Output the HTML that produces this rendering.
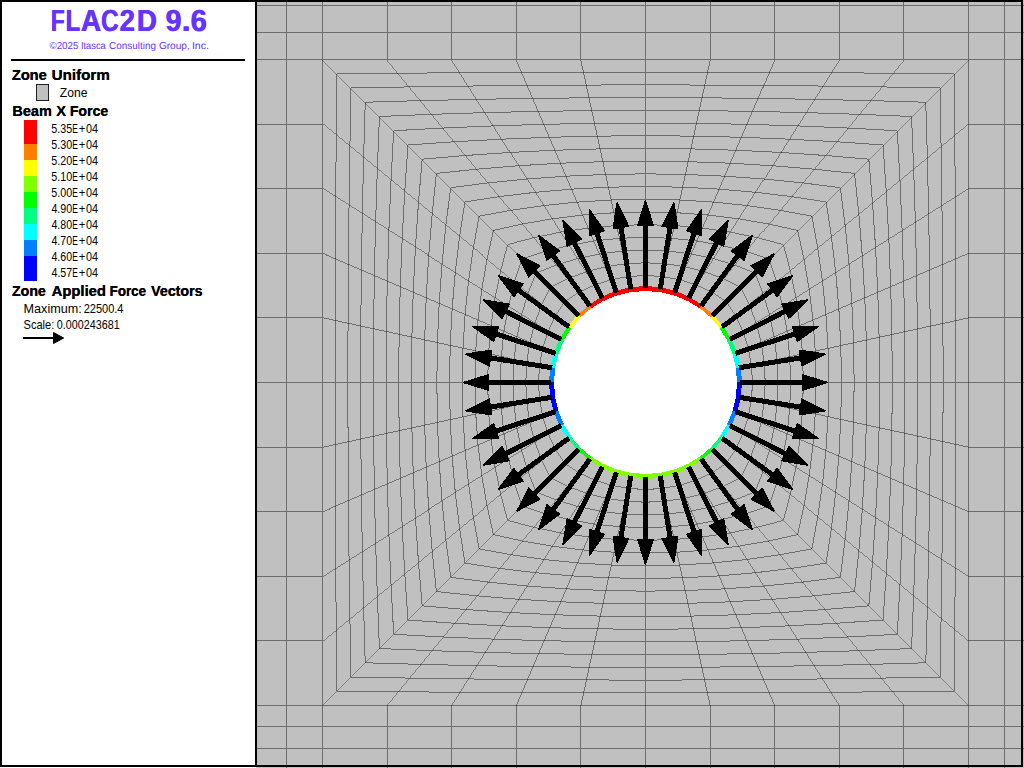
<!DOCTYPE html>
<html><head><meta charset="utf-8"><title>FLAC2D 9.6</title>
<style>
html,body{margin:0;padding:0;background:#fff;}
svg{display:block;font-family:"Liberation Sans",sans-serif;}
</style></head><body>
<svg width="1024" height="768" viewBox="0 0 1024 768">
<rect x="0" y="0" width="1024" height="768" fill="#ffffff"/>
<rect x="256" y="0" width="768" height="768" fill="#c0c0c0"/>
<polygon points="739.8,382.5 738.64,367.75 735.18,353.36 729.52,339.69 721.79,327.07 712.18,315.82 700.93,306.21 688.31,298.48 674.64,292.82 660.25,289.36 645.5,288.2 630.75,289.36 616.36,292.82 602.69,298.48 590.07,306.21 578.82,315.82 569.21,327.07 561.48,339.69 555.82,353.36 552.36,367.75 551.2,382.5 552.36,397.25 555.82,411.64 561.48,425.31 569.21,437.93 578.82,449.18 590.07,458.79 602.69,466.52 616.36,472.18 630.75,475.64 645.5,476.8 660.25,475.64 674.64,472.18 688.31,466.52 700.93,458.79 712.18,449.18 721.79,437.93 729.52,425.31 735.18,411.64 738.64,397.25" fill="#ffffff"/>
<clipPath id="pc"><rect x="257" y="0" width="767" height="768"/></clipPath>
<g fill="none" stroke="#000000" stroke-opacity="0.43" stroke-width="1" shape-rendering="crispEdges" clip-path="url(#pc)">
<path d="M250 5.5H1030M250 32.5H1030M250 59.5H1030M250 705.5H1030M250 726.5H1030M250 748.5H1030M286.5 -5V775M322.5 -5V775M968.5 -5V775M1004.5 -5V775M387.1 -5V59.5M387.1 705.5V775M250 124.1H322.5M968.5 124.1H1030M451.7 -5V59.5M451.7 705.5V775M250 188.7H322.5M968.5 188.7H1030M516.3 -5V59.5M516.3 705.5V775M250 253.3H322.5M968.5 253.3H1030M580.9 -5V59.5M580.9 705.5V775M250 317.9H322.5M968.5 317.9H1030M645.5 -5V59.5M645.5 705.5V775M250 382.5H322.5M968.5 382.5H1030M710.1 -5V59.5M710.1 705.5V775M250 447.1H322.5M968.5 447.1H1030M774.7 -5V59.5M774.7 705.5V775M250 511.7H322.5M968.5 511.7H1030M839.3 -5V59.5M839.3 705.5V775M250 576.3H322.5M968.5 576.3H1030M903.9 -5V59.5M903.9 705.5V775M250 640.9H322.5M968.5 640.9H1030"/>
<path d="M968.5 59.5L712.18 315.82M322.5 59.5L578.82 315.82M322.5 705.5L578.82 449.18M968.5 705.5L712.18 449.18" stroke-width="0.71"/>
<path d="M721.79 327.07L712.18 315.82M712.18 315.82L700.93 306.21M590.07 306.21L578.82 315.82M578.82 315.82L569.21 327.07M569.21 437.93L578.82 449.18M578.82 449.18L590.07 458.79M700.93 458.79L712.18 449.18M712.18 449.18L721.79 437.93" stroke-width="0.77"/>
<path d="M968.5 124.1L721.79 327.07M903.9 59.5L700.93 306.21M387.1 59.5L590.07 306.21M322.5 124.1L569.21 327.07M322.5 640.9L569.21 437.93M387.1 705.5L590.07 458.79M903.9 705.5L700.93 458.79M968.5 640.9L721.79 437.93" stroke-width="0.78"/>
<path d="M968.5 188.7L729.52 339.69M839.3 59.5L688.31 298.48M451.7 59.5L602.69 298.48M322.5 188.7L561.48 339.69M322.5 576.3L561.48 425.31M451.7 705.5L602.69 466.52M839.3 705.5L688.31 466.52M968.5 576.3L729.52 425.31M735.5 315.8L726.42 301.58M726.42 301.58L712.2 292.5M578.8 292.5L564.58 301.58M564.58 301.58L555.5 315.8M555.5 449.2L564.58 463.42M564.58 463.42L578.8 472.5M712.2 472.5L726.42 463.42M726.42 463.42L735.5 449.2" stroke-width="0.85"/>
<path d="M729.52 339.69L721.79 327.07M700.93 306.21L688.31 298.48M602.69 298.48L590.07 306.21M569.21 327.07L561.48 339.69M561.48 425.31L569.21 437.93M590.07 458.79L602.69 466.52M688.31 466.52L700.93 458.79M721.79 437.93L729.52 425.31" stroke-width="0.86"/>
<path d="M749.2 304.52L740.66 287.34M740.66 287.34L723.48 278.8M567.52 278.8L550.34 287.34M550.34 287.34L541.8 304.52M541.8 460.48L550.34 477.66M550.34 477.66L567.52 486.2M723.48 486.2L740.66 477.66M740.66 477.66L749.2 460.48" stroke-width="0.9"/>
<path d="M742.8 331.3L735.5 315.8M712.2 292.5L696.7 285.2M594.3 285.2L578.8 292.5M555.5 315.8L548.2 331.3M548.2 433.7L555.5 449.2M578.8 472.5L594.3 479.8M696.7 479.8L712.2 472.5M735.5 449.2L742.8 433.7" stroke-width="0.91"/>
<path d="M968.5 253.3L735.18 353.36M774.7 59.5L674.64 292.82M516.3 59.5L616.36 292.82M322.5 253.3L555.82 353.36M322.5 511.7L555.82 411.64M516.3 705.5L616.36 472.18M774.7 705.5L674.64 472.18M968.5 511.7L735.18 411.64" stroke-width="0.92"/>
<path d="M762.91 293.24L754.9 273.1M754.9 273.1L734.76 265.09M556.24 265.09L536.1 273.1M536.1 273.1L528.09 293.24M528.09 471.76L536.1 491.9M536.1 491.9L556.24 499.91M734.76 499.91L754.9 491.9M754.9 491.9L762.91 471.76M735.18 353.36L729.52 339.69M688.31 298.48L674.64 292.82M616.36 292.82L602.69 298.48M561.48 339.69L555.82 353.36M555.82 411.64L561.48 425.31M602.69 466.52L616.36 472.18M674.64 472.18L688.31 466.52M729.52 425.31L735.18 411.64" stroke-width="0.93"/>
<path d="M756.08 322.91L749.2 304.52M723.48 278.8L705.09 271.92M585.91 271.92L567.52 278.8M541.8 304.52L534.92 322.91M534.92 442.09L541.8 460.48M567.52 486.2L585.91 493.08M705.09 493.08L723.48 486.2M749.2 460.48L756.08 442.09" stroke-width="0.94"/>
<path d="M776.61 281.97L769.14 258.86M769.14 258.86L746.03 251.39M544.97 251.39L521.86 258.86M521.86 258.86L514.39 281.97M514.39 483.03L521.86 506.14M521.86 506.14L544.97 513.61M746.03 513.61L769.14 506.14M769.14 506.14L776.61 483.03M769.35 314.52L762.91 293.24M734.76 265.09L713.48 258.65M577.52 258.65L556.24 265.09M528.09 293.24L521.65 314.52M521.65 450.48L528.09 471.76M556.24 499.91L577.52 506.35M713.48 506.35L734.76 499.91M762.91 471.76L769.35 450.48M748.15 347.8L742.8 331.3M696.7 285.2L680.2 279.85M610.8 279.85L594.3 285.2M548.2 331.3L542.85 347.8M542.85 417.2L548.2 433.7M594.3 479.8L610.8 485.15M680.2 485.15L696.7 479.8M742.8 433.7L748.15 417.2" stroke-width="0.96"/>
<path d="M790.32 270.69L783.38 244.62M783.38 244.62L757.31 237.68M533.69 237.68L507.62 244.62M507.62 244.62L500.68 270.69M500.68 494.31L507.62 520.38M507.62 520.38L533.69 527.32M757.31 527.32L783.38 520.38M783.38 520.38L790.32 494.31M761.11 342.24L756.08 322.91M705.09 271.92L685.76 266.89M605.24 266.89L585.91 271.92M534.92 322.91L529.89 342.24M529.89 422.76L534.92 442.09M585.91 493.08L605.24 498.11M685.76 498.11L705.09 493.08M756.08 442.09L761.11 422.76" stroke-width="0.97"/>
<path d="M968.5 317.9L738.64 367.75M710.1 59.5L660.25 289.36M580.9 59.5L630.75 289.36M322.5 317.9L552.36 367.75M322.5 447.1L552.36 397.25M580.9 705.5L630.75 475.64M710.1 705.5L660.25 475.64M968.5 447.1L738.64 397.25M804.03 259.41L797.62 230.38M797.62 230.38L768.59 223.97M522.41 223.97L493.38 230.38M493.38 230.38L486.97 259.41M486.97 505.59L493.38 534.62M493.38 534.62L522.41 541.03M768.59 541.03L797.62 534.62M797.62 534.62L804.03 505.59M795.9 297.75L790.32 270.69M757.31 237.68L730.25 232.1M560.75 232.1L533.69 237.68M500.68 270.69L495.1 297.75M495.1 467.25L500.68 494.31M533.69 527.32L560.75 532.9M730.25 532.9L757.31 527.32M790.32 494.31L795.9 467.25M782.63 306.14L776.61 281.97M746.03 251.39L721.86 245.37M569.14 245.37L544.97 251.39M514.39 281.97L508.37 306.14M508.37 458.86L514.39 483.03M544.97 513.61L569.14 519.63M721.86 519.63L746.03 513.61M776.61 483.03L782.63 458.86M774.07 336.68L769.35 314.52M713.48 258.65L691.32 253.93M599.68 253.93L577.52 258.65M521.65 314.52L516.93 336.68M516.93 428.32L521.65 450.48M577.52 506.35L599.68 511.07M691.32 511.07L713.48 506.35M769.35 450.48L774.07 428.32M738.64 367.75L735.18 353.36M674.64 292.82L660.25 289.36M630.75 289.36L616.36 292.82M555.82 353.36L552.36 367.75M552.36 397.25L555.82 411.64M616.36 472.18L630.75 475.64M660.25 475.64L674.64 472.18M735.18 411.64L738.64 397.25" stroke-width="0.98"/>
<path d="M831.44 236.86L826.1 201.9M826.1 201.9L791.14 196.56M499.86 196.56L464.9 201.9M464.9 201.9L459.56 236.86M459.56 528.14L464.9 563.1M464.9 563.1L499.86 568.44M791.14 568.44L826.1 563.1M826.1 563.1L831.44 528.14M822.46 280.97L817.73 248.14M817.73 248.14L811.86 216.14M811.86 216.14L779.86 210.27M779.86 210.27L747.03 205.54M543.97 205.54L511.14 210.27M511.14 210.27L479.14 216.14M479.14 216.14L473.27 248.14M473.27 248.14L468.54 280.97M468.54 484.03L473.27 516.86M473.27 516.86L479.14 548.86M479.14 548.86L511.14 554.73M511.14 554.73L543.97 559.46M747.03 559.46L779.86 554.73M779.86 554.73L811.86 548.86M811.86 548.86L817.73 516.86M817.73 516.86L822.46 484.03M809.18 289.36L804.03 259.41M768.59 223.97L738.64 218.82M552.36 218.82L522.41 223.97M486.97 259.41L481.82 289.36M481.82 475.64L486.97 505.59M522.41 541.03L552.36 546.18M738.64 546.18L768.59 541.03M804.03 505.59L809.18 475.64M799.99 325.57L795.9 297.75M730.25 232.1L702.43 228.01M588.57 228.01L560.75 232.1M495.1 297.75L491.01 325.57M491.01 439.43L495.1 467.25M560.75 532.9L588.57 536.99M702.43 536.99L730.25 532.9M795.9 467.25L799.99 439.43M787.03 331.12L782.63 306.14M721.86 245.37L696.88 240.97M594.12 240.97L569.14 245.37M508.37 306.14L503.97 331.12M503.97 433.88L508.37 458.86M569.14 519.63L594.12 524.03M696.88 524.03L721.86 519.63M782.63 458.86L787.03 433.88M764.18 362.21L761.11 342.24M685.76 266.89L665.79 263.82M625.21 263.82L605.24 266.89M529.89 342.24L526.82 362.21M526.82 402.79L529.89 422.76M605.24 498.11L625.21 501.18M665.79 501.18L685.76 498.11M761.11 422.76L764.18 402.79M751.41 364.98L748.15 347.8M680.2 279.85L663.02 276.59M627.98 276.59L610.8 279.85M542.85 347.8L539.59 364.98M539.59 400.02L542.85 417.2M610.8 485.15L627.98 488.41M663.02 488.41L680.2 485.15M748.15 417.2L751.41 400.02" stroke-width="0.99"/>
<path d="M968.5 382.5L739.8 382.5M645.5 59.5L645.5 288.2M322.5 382.5L551.2 382.5M645.5 705.5L645.5 476.8M955.79 382.5L955.73 320.67M955.73 320.67L955.54 258.86M955.54 258.86L955.22 197.09M955.22 197.09L954.79 135.38M954.79 135.38L954.26 73.74M954.26 73.74L892.62 73.21M892.62 73.21L830.91 72.78M830.91 72.78L769.14 72.46M769.14 72.46L707.33 72.27M707.33 72.27L645.5 72.21M645.5 72.21L583.67 72.27M583.67 72.27L521.86 72.46M521.86 72.46L460.09 72.78M460.09 72.78L398.38 73.21M398.38 73.21L336.74 73.74M336.74 73.74L336.21 135.38M336.21 135.38L335.78 197.09M335.78 197.09L335.46 258.86M335.46 258.86L335.27 320.67M335.27 320.67L335.21 382.5M335.21 382.5L335.27 444.33M335.27 444.33L335.46 506.14M335.46 506.14L335.78 567.91M335.78 567.91L336.21 629.62M336.21 629.62L336.74 691.26M336.74 691.26L398.38 691.79M398.38 691.79L460.09 692.22M460.09 692.22L521.86 692.54M521.86 692.54L583.67 692.73M583.67 692.73L645.5 692.79M645.5 692.79L707.33 692.73M707.33 692.73L769.14 692.54M769.14 692.54L830.91 692.22M830.91 692.22L892.62 691.79M892.62 691.79L954.26 691.26M954.26 691.26L954.79 629.62M954.79 629.62L955.22 567.91M955.22 567.91L955.54 506.14M955.54 506.14L955.73 444.33M955.73 444.33L955.79 382.5M943.09 382.5L942.96 323.44M942.96 323.44L942.58 264.42M942.58 264.42L941.95 205.48M941.95 205.48L941.09 146.65M941.09 146.65L940.02 87.98M940.02 87.98L881.35 86.91M881.35 86.91L822.52 86.05M822.52 86.05L763.58 85.42M763.58 85.42L704.56 85.04M704.56 85.04L645.5 84.91M645.5 84.91L586.44 85.04M586.44 85.04L527.42 85.42M527.42 85.42L468.48 86.05M468.48 86.05L409.65 86.91M409.65 86.91L350.98 87.98M350.98 87.98L349.91 146.65M349.91 146.65L349.05 205.48M349.05 205.48L348.42 264.42M348.42 264.42L348.04 323.44M348.04 323.44L347.91 382.5M347.91 382.5L348.04 441.56M348.04 441.56L348.42 500.58M348.42 500.58L349.05 559.52M349.05 559.52L349.91 618.35M349.91 618.35L350.98 677.02M350.98 677.02L409.65 678.09M409.65 678.09L468.48 678.95M468.48 678.95L527.42 679.58M527.42 679.58L586.44 679.96M586.44 679.96L645.5 680.09M645.5 680.09L704.56 679.96M704.56 679.96L763.58 679.58M763.58 679.58L822.52 678.95M822.52 678.95L881.35 678.09M881.35 678.09L940.02 677.02M940.02 677.02L941.09 618.35M941.09 618.35L941.95 559.52M941.95 559.52L942.58 500.58M942.58 500.58L942.96 441.56M942.96 441.56L943.09 382.5M930.38 382.5L930.19 326.21M930.19 326.21L929.61 269.98M929.61 269.98L928.67 213.86M928.67 213.86L927.38 157.93M927.38 157.93L925.78 102.22M925.78 102.22L870.07 100.62M870.07 100.62L814.14 99.33M814.14 99.33L758.02 98.39M758.02 98.39L701.79 97.81M701.79 97.81L645.5 97.62M645.5 97.62L589.21 97.81M589.21 97.81L532.98 98.39M532.98 98.39L476.86 99.33M476.86 99.33L420.93 100.62M420.93 100.62L365.22 102.22M365.22 102.22L363.62 157.93M363.62 157.93L362.33 213.86M362.33 213.86L361.39 269.98M361.39 269.98L360.81 326.21M360.81 326.21L360.62 382.5M360.62 382.5L360.81 438.79M360.81 438.79L361.39 495.02M361.39 495.02L362.33 551.14M362.33 551.14L363.62 607.07M363.62 607.07L365.22 662.78M365.22 662.78L420.93 664.38M420.93 664.38L476.86 665.67M476.86 665.67L532.98 666.61M532.98 666.61L589.21 667.19M589.21 667.19L645.5 667.38M645.5 667.38L701.79 667.19M701.79 667.19L758.02 666.61M758.02 666.61L814.14 665.67M814.14 665.67L870.07 664.38M870.07 664.38L925.78 662.78M925.78 662.78L927.38 607.07M927.38 607.07L928.67 551.14M928.67 551.14L929.61 495.02M929.61 495.02L930.19 438.79M930.19 438.79L930.38 382.5M917.68 382.5L917.42 328.98M917.42 328.98L916.65 275.54M916.65 275.54L915.39 222.25M915.39 222.25L913.68 169.2M913.68 169.2L911.54 116.46M911.54 116.46L858.8 114.32M858.8 114.32L805.75 112.61M805.75 112.61L752.46 111.35M752.46 111.35L699.02 110.58M699.02 110.58L645.5 110.32M645.5 110.32L591.98 110.58M591.98 110.58L538.54 111.35M538.54 111.35L485.25 112.61M485.25 112.61L432.2 114.32M432.2 114.32L379.46 116.46M379.46 116.46L377.32 169.2M377.32 169.2L375.61 222.25M375.61 222.25L374.35 275.54M374.35 275.54L373.58 328.98M373.58 328.98L373.32 382.5M373.32 382.5L373.58 436.02M373.58 436.02L374.35 489.46M374.35 489.46L375.61 542.75M375.61 542.75L377.32 595.8M377.32 595.8L379.46 648.54M379.46 648.54L432.2 650.68M432.2 650.68L485.25 652.39M485.25 652.39L538.54 653.65M538.54 653.65L591.98 654.42M591.98 654.42L645.5 654.68M645.5 654.68L699.02 654.42M699.02 654.42L752.46 653.65M752.46 653.65L805.75 652.39M805.75 652.39L858.8 650.68M858.8 650.68L911.54 648.54M911.54 648.54L913.68 595.8M913.68 595.8L915.39 542.75M915.39 542.75L916.65 489.46M916.65 489.46L917.42 436.02M917.42 436.02L917.68 382.5M904.97 382.5L904.65 331.75M904.65 331.75L903.69 281.09M903.69 281.09L902.12 230.64M902.12 230.64L899.97 180.48M899.97 180.48L897.3 130.7M897.3 130.7L847.52 128.03M847.52 128.03L797.36 125.88M797.36 125.88L746.91 124.31M746.91 124.31L696.25 123.35M696.25 123.35L645.5 123.03M645.5 123.03L594.75 123.35M594.75 123.35L544.09 124.31M544.09 124.31L493.64 125.88M493.64 125.88L443.48 128.03M443.48 128.03L393.7 130.7M393.7 130.7L391.03 180.48M391.03 180.48L388.88 230.64M388.88 230.64L387.31 281.09M387.31 281.09L386.35 331.75M386.35 331.75L386.03 382.5M386.03 382.5L386.35 433.25M386.35 433.25L387.31 483.91M387.31 483.91L388.88 534.36M388.88 534.36L391.03 584.52M391.03 584.52L393.7 634.3M393.7 634.3L443.48 636.97M443.48 636.97L493.64 639.12M493.64 639.12L544.09 640.69M544.09 640.69L594.75 641.65M594.75 641.65L645.5 641.97M645.5 641.97L696.25 641.65M696.25 641.65L746.91 640.69M746.91 640.69L797.36 639.12M797.36 639.12L847.52 636.97M847.52 636.97L897.3 634.3M897.3 634.3L899.97 584.52M899.97 584.52L902.12 534.36M902.12 534.36L903.69 483.91M903.69 483.91L904.65 433.25M904.65 433.25L904.97 382.5M892.27 382.5L891.88 334.52M891.88 334.52L890.73 286.65M890.73 286.65L888.84 239.03M888.84 239.03L886.26 191.76M886.26 191.76L883.06 144.94M883.06 144.94L836.24 141.74M836.24 141.74L788.97 139.16M788.97 139.16L741.35 137.27M741.35 137.27L693.48 136.12M693.48 136.12L645.5 135.73M645.5 135.73L597.52 136.12M597.52 136.12L549.65 137.27M549.65 137.27L502.03 139.16M502.03 139.16L454.76 141.74M454.76 141.74L407.94 144.94M407.94 144.94L404.74 191.76M404.74 191.76L402.16 239.03M402.16 239.03L400.27 286.65M400.27 286.65L399.12 334.52M399.12 334.52L398.73 382.5M398.73 382.5L399.12 430.48M399.12 430.48L400.27 478.35M400.27 478.35L402.16 525.97M402.16 525.97L404.74 573.24M404.74 573.24L407.94 620.06M407.94 620.06L454.76 623.26M454.76 623.26L502.03 625.84M502.03 625.84L549.65 627.73M549.65 627.73L597.52 628.88M597.52 628.88L645.5 629.27M645.5 629.27L693.48 628.88M693.48 628.88L741.35 627.73M741.35 627.73L788.97 625.84M788.97 625.84L836.24 623.26M836.24 623.26L883.06 620.06M883.06 620.06L886.26 573.24M886.26 573.24L888.84 525.97M888.84 525.97L890.73 478.35M890.73 478.35L891.88 430.48M891.88 430.48L892.27 382.5M879.56 382.5L879.11 337.29M879.11 337.29L877.77 292.21M877.77 292.21L875.56 247.42M875.56 247.42L872.56 203.03M872.56 203.03L868.82 159.18M868.82 159.18L824.97 155.44M824.97 155.44L780.58 152.44M780.58 152.44L735.79 150.23M735.79 150.23L690.71 148.89M690.71 148.89L645.5 148.44M645.5 148.44L600.29 148.89M600.29 148.89L555.21 150.23M555.21 150.23L510.42 152.44M510.42 152.44L466.03 155.44M466.03 155.44L422.18 159.18M422.18 159.18L418.44 203.03M418.44 203.03L415.44 247.42M415.44 247.42L413.23 292.21M413.23 292.21L411.89 337.29M411.89 337.29L411.44 382.5M411.44 382.5L411.89 427.71M411.89 427.71L413.23 472.79M413.23 472.79L415.44 517.58M415.44 517.58L418.44 561.97M418.44 561.97L422.18 605.82M422.18 605.82L466.03 609.56M466.03 609.56L510.42 612.56M510.42 612.56L555.21 614.77M555.21 614.77L600.29 616.11M600.29 616.11L645.5 616.56M645.5 616.56L690.71 616.11M690.71 616.11L735.79 614.77M735.79 614.77L780.58 612.56M780.58 612.56L824.97 609.56M824.97 609.56L868.82 605.82M868.82 605.82L872.56 561.97M872.56 561.97L875.56 517.58M875.56 517.58L877.77 472.79M877.77 472.79L879.11 427.71M879.11 427.71L879.56 382.5M866.86 382.5L866.34 340.05M866.34 340.05L864.8 297.77M864.8 297.77L862.29 255.81M862.29 255.81L858.85 214.31M858.85 214.31L854.58 173.42M854.58 173.42L813.69 169.15M813.69 169.15L772.19 165.71M772.19 165.71L730.23 163.2M730.23 163.2L687.95 161.66M687.95 161.66L645.5 161.14M645.5 161.14L603.05 161.66M603.05 161.66L560.77 163.2M560.77 163.2L518.81 165.71M518.81 165.71L477.31 169.15M477.31 169.15L436.42 173.42M436.42 173.42L432.15 214.31M432.15 214.31L428.71 255.81M428.71 255.81L426.2 297.77M426.2 297.77L424.66 340.05M424.66 340.05L424.14 382.5M424.14 382.5L424.66 424.95M424.66 424.95L426.2 467.23M426.2 467.23L428.71 509.19M428.71 509.19L432.15 550.69M432.15 550.69L436.42 591.58M436.42 591.58L477.31 595.85M477.31 595.85L518.81 599.29M518.81 599.29L560.77 601.8M560.77 601.8L603.05 603.34M603.05 603.34L645.5 603.86M645.5 603.86L687.95 603.34M687.95 603.34L730.23 601.8M730.23 601.8L772.19 599.29M772.19 599.29L813.69 595.85M813.69 595.85L854.58 591.58M854.58 591.58L858.85 550.69M858.85 550.69L862.29 509.19M862.29 509.19L864.8 467.23M864.8 467.23L866.34 424.95M866.34 424.95L866.86 382.5M854.15 382.5L853.57 342.82M853.57 342.82L851.84 303.33M851.84 303.33L849.01 264.19M849.01 264.19L845.15 225.59M845.15 225.59L840.34 187.66M840.34 187.66L802.41 182.85M802.41 182.85L763.81 178.99M763.81 178.99L724.67 176.16M724.67 176.16L685.18 174.43M685.18 174.43L645.5 173.85M645.5 173.85L605.82 174.43M605.82 174.43L566.33 176.16M566.33 176.16L527.19 178.99M527.19 178.99L488.59 182.85M488.59 182.85L450.66 187.66M450.66 187.66L445.85 225.59M445.85 225.59L441.99 264.19M441.99 264.19L439.16 303.33M439.16 303.33L437.43 342.82M437.43 342.82L436.85 382.5M436.85 382.5L437.43 422.18M437.43 422.18L439.16 461.67M439.16 461.67L441.99 500.81M441.99 500.81L445.85 539.41M445.85 539.41L450.66 577.34M450.66 577.34L488.59 582.15M488.59 582.15L527.19 586.01M527.19 586.01L566.33 588.84M566.33 588.84L605.82 590.57M605.82 590.57L645.5 591.15M645.5 591.15L685.18 590.57M685.18 590.57L724.67 588.84M724.67 588.84L763.81 586.01M763.81 586.01L802.41 582.15M802.41 582.15L840.34 577.34M840.34 577.34L845.15 539.41M845.15 539.41L849.01 500.81M849.01 500.81L851.84 461.67M851.84 461.67L853.57 422.18M853.57 422.18L854.15 382.5M841.44 382.5L840.8 345.59M840.8 345.59L838.88 308.89M838.88 308.89L835.73 272.58M835.73 272.58L831.44 236.86M791.14 196.56L755.42 192.27M755.42 192.27L719.11 189.12M719.11 189.12L682.41 187.2M682.41 187.2L645.5 186.56M645.5 186.56L608.59 187.2M608.59 187.2L571.89 189.12M571.89 189.12L535.58 192.27M535.58 192.27L499.86 196.56M459.56 236.86L455.27 272.58M455.27 272.58L452.12 308.89M452.12 308.89L450.2 345.59M450.2 345.59L449.56 382.5M449.56 382.5L450.2 419.41M450.2 419.41L452.12 456.11M452.12 456.11L455.27 492.42M455.27 492.42L459.56 528.14M499.86 568.44L535.58 572.73M535.58 572.73L571.89 575.88M571.89 575.88L608.59 577.8M608.59 577.8L645.5 578.44M645.5 578.44L682.41 577.8M682.41 577.8L719.11 575.88M719.11 575.88L755.42 572.73M755.42 572.73L791.14 568.44M831.44 528.14L835.73 492.42M835.73 492.42L838.88 456.11M838.88 456.11L840.8 419.41M840.8 419.41L841.44 382.5M828.74 382.5L828.03 348.36M828.03 348.36L825.92 314.45M825.92 314.45L822.46 280.97M747.03 205.54L713.55 202.08M713.55 202.08L679.64 199.97M679.64 199.97L645.5 199.26M645.5 199.26L611.36 199.97M611.36 199.97L577.45 202.08M577.45 202.08L543.97 205.54M468.54 280.97L465.08 314.45M465.08 314.45L462.97 348.36M462.97 348.36L462.26 382.5M462.26 382.5L462.97 416.64M462.97 416.64L465.08 450.55M465.08 450.55L468.54 484.03M543.97 559.46L577.45 562.92M577.45 562.92L611.36 565.03M611.36 565.03L645.5 565.74M645.5 565.74L679.64 565.03M679.64 565.03L713.55 562.92M713.55 562.92L747.03 559.46M822.46 484.03L825.92 450.55M825.92 450.55L828.03 416.64M828.03 416.64L828.74 382.5M816.03 382.5L815.26 351.13M815.26 351.13L812.96 320.01M812.96 320.01L809.18 289.36M738.64 218.82L707.99 215.04M707.99 215.04L676.87 212.74M676.87 212.74L645.5 211.97M645.5 211.97L614.13 212.74M614.13 212.74L583.01 215.04M583.01 215.04L552.36 218.82M481.82 289.36L478.04 320.01M478.04 320.01L475.74 351.13M475.74 351.13L474.97 382.5M474.97 382.5L475.74 413.87M475.74 413.87L478.04 444.99M478.04 444.99L481.82 475.64M552.36 546.18L583.01 549.96M583.01 549.96L614.13 552.26M614.13 552.26L645.5 553.03M645.5 553.03L676.87 552.26M676.87 552.26L707.99 549.96M707.99 549.96L738.64 546.18M809.18 475.64L812.96 444.99M812.96 444.99L815.26 413.87M815.26 413.87L816.03 382.5M803.33 382.5L802.49 353.9M802.49 353.9L799.99 325.57M702.43 228.01L674.1 225.51M674.1 225.51L645.5 224.67M645.5 224.67L616.9 225.51M616.9 225.51L588.57 228.01M491.01 325.57L488.51 353.9M488.51 353.9L487.67 382.5M487.67 382.5L488.51 411.1M488.51 411.1L491.01 439.43M588.57 536.99L616.9 539.49M616.9 539.49L645.5 540.33M645.5 540.33L674.1 539.49M674.1 539.49L702.43 536.99M799.99 439.43L802.49 411.1M802.49 411.1L803.33 382.5M790.62 382.5L789.72 356.67M789.72 356.67L787.03 331.12M696.88 240.97L671.33 238.28M671.33 238.28L645.5 237.38M645.5 237.38L619.67 238.28M619.67 238.28L594.12 240.97M503.97 331.12L501.28 356.67M501.28 356.67L500.38 382.5M500.38 382.5L501.28 408.33M501.28 408.33L503.97 433.88M594.12 524.03L619.67 526.72M619.67 526.72L645.5 527.62M645.5 527.62L671.33 526.72M671.33 526.72L696.88 524.03M787.03 433.88L789.72 408.33M789.72 408.33L790.62 382.5M777.92 382.5L776.95 359.44M776.95 359.44L774.07 336.68M691.32 253.93L668.56 251.05M668.56 251.05L645.5 250.08M645.5 250.08L622.44 251.05M622.44 251.05L599.68 253.93M516.93 336.68L514.05 359.44M514.05 359.44L513.08 382.5M513.08 382.5L514.05 405.56M514.05 405.56L516.93 428.32M599.68 511.07L622.44 513.95M622.44 513.95L645.5 514.92M645.5 514.92L668.56 513.95M668.56 513.95L691.32 511.07M774.07 428.32L776.95 405.56M776.95 405.56L777.92 382.5M765.21 382.5L764.18 362.21M665.79 263.82L645.5 262.79M645.5 262.79L625.21 263.82M526.82 362.21L525.79 382.5M525.79 382.5L526.82 402.79M625.21 501.18L645.5 502.21M645.5 502.21L665.79 501.18M764.18 402.79L765.21 382.5M752.51 382.5L751.41 364.98M663.02 276.59L645.5 275.49M645.5 275.49L627.98 276.59M539.59 364.98L538.49 382.5M538.49 382.5L539.59 400.02M627.98 488.41L645.5 489.51M645.5 489.51L663.02 488.41M751.41 400.02L752.51 382.5M739.8 382.5L738.64 367.75M660.25 289.36L645.5 288.2M645.5 288.2L630.75 289.36M552.36 367.75L551.2 382.5M551.2 382.5L552.36 397.25M630.75 475.64L645.5 476.8M645.5 476.8L660.25 475.64M738.64 397.25L739.8 382.5" stroke-width="1"/>
</g>
<g fill="none" stroke-width="5" shape-rendering="crispEdges">
<path d="M739.5 382.5L738.34 367.8" stroke="#0080ff" stroke-width="4.98"/>
<path d="M738.34 367.8L734.9 353.45" stroke="#00ffff" stroke-width="4.86"/>
<path d="M734.9 353.45L729.25 339.82" stroke="#00ff80" stroke-width="4.62"/>
<path d="M729.25 339.82L721.55 327.25" stroke="#00ff00" stroke-width="4.26"/>
<path d="M721.55 327.25L711.97 316.03" stroke="#ffff00" stroke-width="3.80"/>
<path d="M711.97 316.03L700.75 306.45" stroke="#ff8000" stroke-width="3.80"/>
<path d="M700.75 306.45L688.18 298.75" stroke="#ff0000" stroke-width="4.26"/>
<path d="M688.18 298.75L674.55 293.1" stroke="#ff0000" stroke-width="4.62"/>
<path d="M674.55 293.1L660.2 289.66" stroke="#ff0000" stroke-width="4.86"/>
<path d="M660.2 289.66L645.5 288.5" stroke="#ff0000" stroke-width="4.98"/>
<path d="M645.5 288.5L630.8 289.66" stroke="#ff0000" stroke-width="4.98"/>
<path d="M630.8 289.66L616.45 293.1" stroke="#ff0000" stroke-width="4.86"/>
<path d="M616.45 293.1L602.82 298.75" stroke="#ff0000" stroke-width="4.62"/>
<path d="M602.82 298.75L590.25 306.45" stroke="#ff0000" stroke-width="4.26"/>
<path d="M590.25 306.45L579.03 316.03" stroke="#ff8000" stroke-width="3.80"/>
<path d="M579.03 316.03L569.45 327.25" stroke="#ffff00" stroke-width="3.80"/>
<path d="M569.45 327.25L561.75 339.82" stroke="#00ff00" stroke-width="4.26"/>
<path d="M561.75 339.82L556.1 353.45" stroke="#00ff80" stroke-width="4.62"/>
<path d="M556.1 353.45L552.66 367.8" stroke="#00ffff" stroke-width="4.86"/>
<path d="M552.66 367.8L551.5 382.5" stroke="#0080ff" stroke-width="4.98"/>
<path d="M551.5 382.5L552.66 397.2" stroke="#0000ff" stroke-width="4.98"/>
<path d="M552.66 397.2L556.1 411.55" stroke="#0000ff" stroke-width="4.86"/>
<path d="M556.1 411.55L561.75 425.18" stroke="#0080ff" stroke-width="4.62"/>
<path d="M561.75 425.18L569.45 437.75" stroke="#00ffff" stroke-width="4.26"/>
<path d="M569.45 437.75L579.03 448.97" stroke="#00ff80" stroke-width="3.80"/>
<path d="M579.03 448.97L590.25 458.55" stroke="#00ff00" stroke-width="3.80"/>
<path d="M590.25 458.55L602.82 466.25" stroke="#80ff00" stroke-width="4.26"/>
<path d="M602.82 466.25L616.45 471.9" stroke="#80ff00" stroke-width="4.62"/>
<path d="M616.45 471.9L630.8 475.34" stroke="#80ff00" stroke-width="4.86"/>
<path d="M630.8 475.34L645.5 476.5" stroke="#80ff00" stroke-width="4.98"/>
<path d="M645.5 476.5L660.2 475.34" stroke="#80ff00" stroke-width="4.98"/>
<path d="M660.2 475.34L674.55 471.9" stroke="#80ff00" stroke-width="4.86"/>
<path d="M674.55 471.9L688.18 466.25" stroke="#80ff00" stroke-width="4.62"/>
<path d="M688.18 466.25L700.75 458.55" stroke="#80ff00" stroke-width="4.26"/>
<path d="M700.75 458.55L711.97 448.97" stroke="#00ff00" stroke-width="3.80"/>
<path d="M711.97 448.97L721.55 437.75" stroke="#00ff80" stroke-width="3.80"/>
<path d="M721.55 437.75L729.25 425.18" stroke="#00ffff" stroke-width="4.26"/>
<path d="M729.25 425.18L734.9 411.55" stroke="#0080ff" stroke-width="4.62"/>
<path d="M734.9 411.55L738.34 397.2" stroke="#0000ff" stroke-width="4.86"/>
<path d="M738.34 397.2L739.5 382.5" stroke="#0000ff" stroke-width="4.98"/>
</g>
<path d="M740 380L801.8 380L801.8 373.8L827.8 381.9L827.8 383.1L801.8 391.2L801.8 385L740 385ZM738.45 365.25L799.48 355.58L798.51 349.46L825.46 353.39L825.65 354.57L801.24 366.64L800.27 360.52L739.23 370.19ZM734.6 350.92L793.38 331.82L791.46 325.93L818.69 325.6L819.06 326.74L796.84 342.47L794.92 336.58L736.15 355.68ZM728.57 337.37L783.63 309.31L780.81 303.79L807.66 299.2L808.2 300.27L788.71 319.29L785.9 313.77L730.84 341.83ZM720.48 324.93L770.48 288.61L766.84 283.59L792.63 274.86L793.34 275.83L777.06 297.67L773.42 292.65L723.42 328.98ZM710.55 313.91L754.25 270.21L749.87 265.83L773.98 253.17L774.83 254.02L762.17 278.13L757.79 273.75L714.09 317.45ZM699.02 304.58L735.35 254.58L730.33 250.94L752.17 234.66L753.14 235.37L744.41 261.16L739.39 257.52L703.07 307.52ZM686.17 297.16L714.23 242.1L708.71 239.29L727.73 219.8L728.8 220.34L724.21 247.19L718.69 244.37L690.63 299.43ZM672.32 291.85L691.42 233.08L685.53 231.16L701.26 208.94L702.4 209.31L702.07 236.54L696.18 234.62L677.08 293.4ZM657.81 288.77L667.48 227.73L661.36 226.76L673.43 202.35L674.61 202.54L678.54 229.49L672.42 228.52L662.75 289.55ZM643 288L643 226.2L636.8 226.2L644.9 200.2L646.1 200.2L654.2 226.2L648 226.2L648 288ZM628.25 289.55L618.58 228.52L612.46 229.49L616.39 202.54L617.57 202.35L629.64 226.76L623.52 227.73L633.19 288.77ZM613.92 293.4L594.82 234.62L588.93 236.54L588.6 209.31L589.74 208.94L605.47 231.16L599.58 233.08L618.68 291.85ZM600.37 299.43L572.31 244.37L566.79 247.19L562.2 220.34L563.27 219.8L582.29 239.29L576.77 242.1L604.83 297.16ZM587.93 307.52L551.61 257.52L546.59 261.16L537.86 235.37L538.83 234.66L560.67 250.94L555.65 254.58L591.98 304.58ZM576.91 317.45L533.21 273.75L528.83 278.13L516.17 254.02L517.02 253.17L541.13 265.83L536.75 270.21L580.45 313.91ZM567.58 328.98L517.58 292.65L513.94 297.67L497.66 275.83L498.37 274.86L524.16 283.59L520.52 288.61L570.52 324.93ZM560.16 341.83L505.1 313.77L502.29 319.29L482.8 300.27L483.34 299.2L510.19 303.79L507.37 309.31L562.43 337.37ZM554.85 355.68L496.08 336.58L494.16 342.47L471.94 326.74L472.31 325.6L499.54 325.93L497.62 331.82L556.4 350.92ZM551.77 370.19L490.73 360.52L489.76 366.64L465.35 354.57L465.54 353.39L492.49 349.46L491.52 355.58L552.55 365.25ZM551 385L489.2 385L489.2 391.2L463.2 383.1L463.2 381.9L489.2 373.8L489.2 380L551 380ZM552.55 399.75L491.52 409.42L492.49 415.54L465.54 411.61L465.35 410.43L489.76 398.36L490.73 404.48L551.77 394.81ZM556.4 414.08L497.62 433.18L499.54 439.07L472.31 439.4L471.94 438.26L494.16 422.53L496.08 428.42L554.85 409.32ZM562.43 427.63L507.37 455.69L510.19 461.21L483.34 465.8L482.8 464.73L502.29 445.71L505.1 451.23L560.16 423.17ZM570.52 440.07L520.52 476.39L524.16 481.41L498.37 490.14L497.66 489.17L513.94 467.33L517.58 472.35L567.58 436.02ZM580.45 451.09L536.75 494.79L541.13 499.17L517.02 511.83L516.17 510.98L528.83 486.87L533.21 491.25L576.91 447.55ZM591.98 460.42L555.65 510.42L560.67 514.06L538.83 530.34L537.86 529.63L546.59 503.84L551.61 507.48L587.93 457.48ZM604.83 467.84L576.77 522.9L582.29 525.71L563.27 545.2L562.2 544.66L566.79 517.81L572.31 520.63L600.37 465.57ZM618.68 473.15L599.58 531.92L605.47 533.84L589.74 556.06L588.6 555.69L588.93 528.46L594.82 530.38L613.92 471.6ZM633.19 476.23L623.52 537.27L629.64 538.24L617.57 562.65L616.39 562.46L612.46 535.51L618.58 536.48L628.25 475.45ZM648 477L648 538.8L654.2 538.8L646.1 564.8L644.9 564.8L636.8 538.8L643 538.8L643 477ZM662.75 475.45L672.42 536.48L678.54 535.51L674.61 562.46L673.43 562.65L661.36 538.24L667.48 537.27L657.81 476.23ZM677.08 471.6L696.18 530.38L702.07 528.46L702.4 555.69L701.26 556.06L685.53 533.84L691.42 531.92L672.32 473.15ZM690.63 465.57L718.69 520.63L724.21 517.81L728.8 544.66L727.73 545.2L708.71 525.71L714.23 522.9L686.17 467.84ZM703.07 457.48L739.39 507.48L744.41 503.84L753.14 529.63L752.17 530.34L730.33 514.06L735.35 510.42L699.02 460.42ZM714.09 447.55L757.79 491.25L762.17 486.87L774.83 510.98L773.98 511.83L749.87 499.17L754.25 494.79L710.55 451.09ZM723.42 436.02L773.42 472.35L777.06 467.33L793.34 489.17L792.63 490.14L766.84 481.41L770.48 476.39L720.48 440.07ZM730.84 423.17L785.9 451.23L788.71 445.71L808.2 464.73L807.66 465.8L780.81 461.21L783.63 455.69L728.57 427.63ZM736.15 409.32L794.92 428.42L796.84 422.53L819.06 438.26L818.69 439.4L791.46 439.07L793.38 433.18L734.6 414.08ZM739.23 394.81L800.27 404.48L801.24 398.36L825.65 410.43L825.46 411.61L798.51 415.54L799.48 409.42L738.45 399.75Z" fill="#000000" shape-rendering="crispEdges"/>
<!-- frame -->
<g fill="#000000" shape-rendering="crispEdges">
<rect x="0" y="0" width="1023" height="2"/>
<rect x="0" y="765" width="1023" height="2"/>
<rect x="0" y="0" width="2" height="767"/>
<rect x="1021" y="0" width="2" height="767"/>
<rect x="255" y="0" width="2" height="767"/>
<rect x="11" y="59" width="234" height="2"/>
</g>
<rect x="2" y="767" width="253" height="1" fill="#ffffff"/>
<!-- legend -->
<g fill="#6633ff" font-weight="bold" text-rendering="geometricPrecision">
<text transform="translate(50.42 31) scale(0.7479 1)" font-size="30.6">F</text><text transform="translate(51.12 31) scale(0.7479 1)" font-size="30.6">F</text>
<text transform="translate(65.31 31) scale(0.7769 1)" font-size="30.6">L</text><text transform="translate(66.01 31) scale(0.7769 1)" font-size="30.6">L</text>
<text transform="translate(80.50 31) scale(0.9158 1)" font-size="30.6">A</text><text transform="translate(81.20 31) scale(0.9158 1)" font-size="30.6">A</text>
<text transform="translate(100.81 31) scale(0.7897 1)" font-size="30.6">C</text><text transform="translate(101.51 31) scale(0.7897 1)" font-size="30.6">C</text>
<text transform="translate(119.25 31) scale(0.8960 1)" font-size="30.6">2</text><text transform="translate(119.95 31) scale(0.8960 1)" font-size="30.6">2</text>
<text transform="translate(136.55 31) scale(0.9059 1)" font-size="30.6">D</text><text transform="translate(137.25 31) scale(0.9059 1)" font-size="30.6">D</text>
<text transform="translate(165.21 31) scale(0.9311 1)" font-size="30.6">9</text><text transform="translate(165.91 31) scale(0.9311 1)" font-size="30.6">9</text>
<text transform="translate(181.29 31) scale(1.0653 1)" font-size="30.6">.</text><text transform="translate(181.99 31) scale(1.0653 1)" font-size="30.6">.</text>
<text transform="translate(190.33 31) scale(0.9532 1)" font-size="30.6">6</text><text transform="translate(191.03 31) scale(0.9532 1)" font-size="30.6">6</text>
</g>
<g fill="#6633ff" text-rendering="geometricPrecision">
<text transform="translate(49.55 49) scale(0.9614 1)" font-size="10.1">©2025</text>
<text transform="translate(80.94 49) scale(0.9226 1)" font-size="10.1">Itasca</text>
<text transform="translate(109.10 49) scale(0.9815 1)" font-size="10.1">Consulting</text>
<text transform="translate(158.89 49) scale(1.0013 1)" font-size="10.1">Group,</text>
<text transform="translate(191.92 49) scale(1.0468 1)" font-size="10.1">Inc.</text>
</g>
<g fill="#000000" font-weight="bold">
<text transform="translate(11.76 80) scale(1.0300 1)" font-size="14.2">Zone</text><text transform="translate(11.96 80) scale(1.0300 1)" font-size="14.2">Zone</text>
<text transform="translate(51.59 80) scale(1.0684 1)" font-size="14.2">Uniform</text><text transform="translate(51.79 80) scale(1.0684 1)" font-size="14.2">Uniform</text>
<text transform="translate(12.33 116) scale(1.0205 1)" font-size="14.2">Beam</text><text transform="translate(12.53 116) scale(1.0205 1)" font-size="14.2">Beam</text>
<text transform="translate(56.17 116) scale(1.0302 1)" font-size="14.2">X</text><text transform="translate(56.37 116) scale(1.0302 1)" font-size="14.2">X</text>
<text transform="translate(69.76 116) scale(0.9924 1)" font-size="14.2">Force</text><text transform="translate(69.96 116) scale(0.9924 1)" font-size="14.2">Force</text>
<text transform="translate(11.88 296) scale(0.9997 1)" font-size="14.2">Zone</text><text transform="translate(12.08 296) scale(0.9997 1)" font-size="14.2">Zone</text>
<text transform="translate(51.53 296) scale(1.0438 1)" font-size="14.2">Applied</text><text transform="translate(51.73 296) scale(1.0438 1)" font-size="14.2">Applied</text>
<text transform="translate(109.61 296) scale(0.9400 1)" font-size="14.2">Force</text><text transform="translate(109.81 296) scale(0.9400 1)" font-size="14.2">Force</text>
<text transform="translate(151.10 296) scale(1.0017 1)" font-size="14.2">Vectors</text><text transform="translate(151.30 296) scale(1.0017 1)" font-size="14.2">Vectors</text>
</g>
<rect x="36.5" y="84.5" width="12" height="16" fill="#c0c0c0" stroke="#202020" stroke-width="1"/>
<g fill="#000000">
<text transform="translate(59.81 96.8) scale(0.9810 1)" font-size="12.4">Zone</text>
<text transform="translate(51.27 132.8) scale(0.8652 1)" font-size="12.4">5.35</text><text transform="translate(72.20 132.8) scale(0.6845 1)" font-size="12.4">E</text><text transform="translate(78.65 132.8) scale(0.9130 1)" font-size="12.4">+</text><text transform="translate(86.08 132.8) scale(0.8729 1)" font-size="12.4">04</text>
<text transform="translate(51.27 148.8) scale(0.8638 1)" font-size="12.4">5.30</text><text transform="translate(72.20 148.8) scale(0.6845 1)" font-size="12.4">E</text><text transform="translate(78.65 148.8) scale(0.9130 1)" font-size="12.4">+</text><text transform="translate(86.08 148.8) scale(0.8729 1)" font-size="12.4">04</text>
<text transform="translate(51.27 164.8) scale(0.8638 1)" font-size="12.4">5.20</text><text transform="translate(72.20 164.8) scale(0.6845 1)" font-size="12.4">E</text><text transform="translate(78.65 164.8) scale(0.9130 1)" font-size="12.4">+</text><text transform="translate(86.08 164.8) scale(0.8729 1)" font-size="12.4">04</text>
<text transform="translate(51.27 180.8) scale(0.8638 1)" font-size="12.4">5.10</text><text transform="translate(72.20 180.8) scale(0.6845 1)" font-size="12.4">E</text><text transform="translate(78.65 180.8) scale(0.9130 1)" font-size="12.4">+</text><text transform="translate(86.08 180.8) scale(0.8729 1)" font-size="12.4">04</text>
<text transform="translate(51.27 196.8) scale(0.8638 1)" font-size="12.4">5.00</text><text transform="translate(72.20 196.8) scale(0.6845 1)" font-size="12.4">E</text><text transform="translate(78.65 196.8) scale(0.9130 1)" font-size="12.4">+</text><text transform="translate(86.08 196.8) scale(0.8729 1)" font-size="12.4">04</text>
<text transform="translate(51.46 212.8) scale(0.8560 1)" font-size="12.4">4.90</text><text transform="translate(72.20 212.8) scale(0.6845 1)" font-size="12.4">E</text><text transform="translate(78.65 212.8) scale(0.9130 1)" font-size="12.4">+</text><text transform="translate(86.08 212.8) scale(0.8729 1)" font-size="12.4">04</text>
<text transform="translate(51.46 228.8) scale(0.8560 1)" font-size="12.4">4.80</text><text transform="translate(72.20 228.8) scale(0.6845 1)" font-size="12.4">E</text><text transform="translate(78.65 228.8) scale(0.9130 1)" font-size="12.4">+</text><text transform="translate(86.08 228.8) scale(0.8729 1)" font-size="12.4">04</text>
<text transform="translate(51.46 244.8) scale(0.8560 1)" font-size="12.4">4.70</text><text transform="translate(72.20 244.8) scale(0.6845 1)" font-size="12.4">E</text><text transform="translate(78.65 244.8) scale(0.9130 1)" font-size="12.4">+</text><text transform="translate(86.08 244.8) scale(0.8729 1)" font-size="12.4">04</text>
<text transform="translate(51.46 260.8) scale(0.8560 1)" font-size="12.4">4.60</text><text transform="translate(72.20 260.8) scale(0.6845 1)" font-size="12.4">E</text><text transform="translate(78.65 260.8) scale(0.9130 1)" font-size="12.4">+</text><text transform="translate(86.08 260.8) scale(0.8729 1)" font-size="12.4">04</text>
<text transform="translate(51.45 276.8) scale(0.8611 1)" font-size="12.4">4.57</text><text transform="translate(72.20 276.8) scale(0.6845 1)" font-size="12.4">E</text><text transform="translate(78.65 276.8) scale(0.9130 1)" font-size="12.4">+</text><text transform="translate(86.08 276.8) scale(0.8729 1)" font-size="12.4">04</text>
<text transform="translate(23.56 312.8) scale(1.0194 1)" font-size="12.4">Maximum:</text>
<text transform="translate(83.65 312.8) scale(0.8897 1)" font-size="12.4">22500.4</text>
<text transform="translate(23.50 328.8) scale(0.8942 1)" font-size="12.4">Scale:</text>
<text transform="translate(56.78 328.8) scale(0.8707 1)" font-size="12.4">0.000243681</text>
</g>
<rect x="24" y="120" width="13" height="24" fill="#ff0000"/>
<rect x="24" y="144" width="13" height="16" fill="#ff8000"/>
<rect x="24" y="160" width="13" height="16" fill="#ffff00"/>
<rect x="24" y="176" width="13" height="16" fill="#80ff00"/>
<rect x="24" y="192" width="13" height="16" fill="#00ff00"/>
<rect x="24" y="208" width="13" height="16" fill="#00ff80"/>
<rect x="24" y="224" width="13" height="16" fill="#00ffff"/>
<rect x="24" y="240" width="13" height="16" fill="#0080ff"/>
<rect x="24" y="256" width="13" height="25" fill="#0000ff"/>
<rect x="23" y="337" width="31" height="2" fill="#000000" shape-rendering="crispEdges"/>
<path d="M53.5 332.5L63.7 338L53.5 343.5Z" fill="#000000" stroke="#000000" stroke-width="1" stroke-linejoin="round"/>
</svg>
</body></html>
